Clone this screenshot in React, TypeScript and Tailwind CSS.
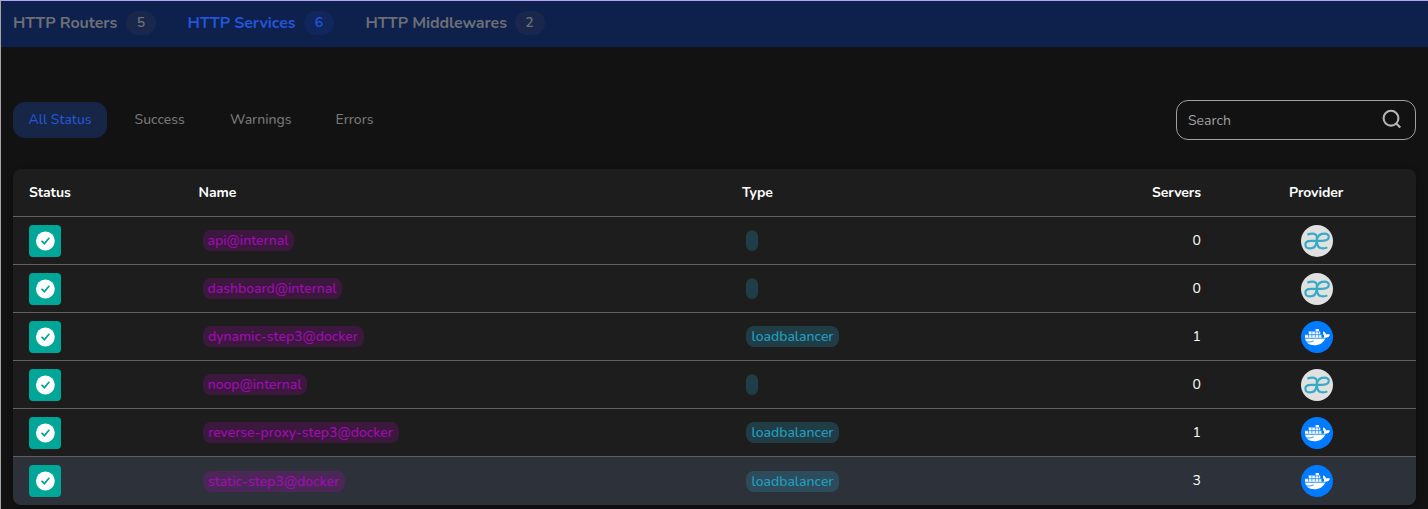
const tabs = [
  { label: 'HTTP Routers', count: 5, width: 'w-[105px]', active: false },
  { label: 'HTTP Services', count: 6, width: 'w-[108.5px]', active: true },
  { label: 'HTTP Middlewares', count: 2, width: 'w-[141px]', active: false },
];

const services = [
  { name: 'api@internal', type: '', servers: 0, provider: 'internal', chip: 'w-[91px]' },
  { name: 'dashboard@internal', type: '', servers: 0, provider: 'internal', chip: 'w-[139px]' },
  { name: 'dynamic-step3@docker', type: 'loadbalancer', servers: 1, provider: 'docker', chip: 'w-[161px]' },
  { name: 'noop@internal', type: '', servers: 0, provider: 'internal', chip: 'w-[104px]' },
  { name: 'reverse-proxy-step3@docker', type: 'loadbalancer', servers: 1, provider: 'docker', chip: 'w-[196px]' },
  { name: 'static-step3@docker', type: 'loadbalancer', servers: 3, provider: 'docker', chip: 'w-[142px]' },
];

function StatusIcon() {
  return (
    <span className="flex size-8 items-center justify-center rounded-[4px] bg-[#00a697]">
      <svg viewBox="0 0 20 20" className="size-5">
        <circle cx="10.4" cy="10" r="9.4" fill="#fff" />
        <path d="m6.5 9.8 2.9 2.9 4.9-6" fill="none" stroke="#00a697" strokeWidth="1.7" />
      </svg>
    </span>
  );
}

function ProviderIcon({ provider }: { provider: string }) {
  if (provider === 'docker') {
    return (
      <svg viewBox="0 0 32 32" className="size-8">
        <circle cx="16" cy="16" r="16" fill="#007bff" />
        <g fill="#fff">
          <path d="M14 8h4v2.9h-4zM7.2 10.6h12v3.2h-12zM4 13.6h16.4v3.4H4z" />
          <path d="M4 16.8h18.2c1-.6 1.3-1.4.6-2.5-.9-1.3-1-2.7-.5-4 1.6.8 2.5 1.9 2.9 3.2 1.3-.4 2.6-.4 3.8.2-.7 1.9-2.1 2.8-4.2 3-2.3 5-6.2 7.5-11.4 7.5C7.6 24.2 4.4 21.4 4 16.8z" />
        </g>
        <path d="M4 13.7h16.4M14 10.8h4M7.5 10.6v6M10.9 10.6v6M14.3 8v8.6M17.7 10.6v6" fill="none" stroke="#007bff" strokeWidth=".7" />
        <path d="M3.6 17.3h23M5.1 20.8c2.4.5 5.2.2 7.6-1" fill="none" stroke="#007bff" strokeWidth=".8" />
      </svg>
    );
  }
  return (
    <svg viewBox="0 0 32 32" className="size-8">
      <circle cx="16" cy="16" r="16" fill="#e1e1e1" />
      <g fill="none" stroke="#38abc9">
        <path strokeWidth="2.2" d="M6.4 9.8c1.4-.8 2.9-1.2 4.6-1.2 3.6 0 5 1.6 4.9 4.6l-.3 3.5c-.3 4.2-2.8 6.7-6.4 6.7-3 0-4.8-1.4-4.8-3.7 0-2.7 2-3.9 5.4-3.9H21" />
        <path strokeWidth="2.2" d="M21 15.8c4.4 0 6.8-1 6.8-3.7 0-2.3-1.8-3.5-4.6-3.5-4.7 0-7.3 3.1-7.3 7.8 0 4.6 2.3 7 6.2 7 1.6 0 3-.3 4.3-1" />
      </g>
    </svg>
  );
}

const columns = 'grid grid-cols-[169.5px_543.5px_220px_239px_1fr] pl-4';

export default function App() {
  return (
    <div className="h-[509px] overflow-hidden border-t border-l border-t-[#b3a2f5] border-l-[#a5a5a5] bg-[#121212] font-['Nunito','Lato',sans-serif] text-[14px] leading-5">
      <nav className="-ml-px flex h-[46px] items-center border-l border-[#9f90ee] bg-[#0e204c] pb-[2px] pl-3">
        {tabs.map((tab) => (
          <div key={tab.label} className={`mr-[31.5px] flex items-center gap-2 text-[16px] font-bold ${tab.active ? 'text-[#2256d8]' : 'text-[#6c6f76]'}`}>
            <span className={`whitespace-nowrap tracking-[-0.09px] ${tab.width}`}>{tab.label}</span>
            <span className={`flex h-6 w-[30px] items-center justify-center rounded-xl text-[14px] font-semibold ${tab.active ? 'bg-[#10265c]' : 'bg-[#1a274c]'}`}>{tab.count}</span>
          </div>
        ))}
      </nav>

      <main className="px-3 pt-[53px]">
        <div className="flex h-10 items-center justify-between">
          <div className="flex h-9 items-center font-medium text-[#777]">
            <span className="mr-[27.5px] flex h-9 w-[94px] items-center justify-center rounded-xl bg-[#172546] text-[#2256d8]">All Status</span>
            <span className="w-[95.5px]">Success</span>
            <span className="w-[105.5px]">Warnings</span>
            <span>Errors</span>
          </div>
          <div className="flex h-10 w-60 items-center justify-between rounded-xl border border-[#a0a0a0] pr-3 pl-[11px] text-[#a0a0a0]">
            <span className="pt-0.5">Search</span>
            <svg viewBox="0 0 22 22" className="size-[22px]" fill="none" stroke="#b5b5b5" strokeWidth="2.1">
              <circle cx="10" cy="9.2" r="7.4" />
              <path d="m15.2 14.4 4.1 4.1" />
            </svg>
          </div>
        </div>

        <section className="mt-[29px] overflow-hidden rounded-lg bg-[#1d1d1d] text-white shadow-[0_1px_5px_rgba(0,0,0,0.4)]">
          <div className={`${columns} h-12 items-center border-b border-[#606060] font-bold tracking-[-0.06px]`}>
            <span>Status</span>
            <span>Name</span>
            <span>Type</span>
            <span className="text-right">Servers</span>
            <span className="pl-[88px]">Provider</span>
          </div>
          {services.map((service, i) => {
            const last = i === services.length - 1;
            return (
              <div key={service.name} className={`${columns} h-12 items-center ${last ? 'bg-[#2d3139]' : 'border-b border-[#606060]'}`}>
                <StatusIcon />
                <span className={`ml-[4.5px] flex h-[21px] items-center justify-center rounded-lg pr-px font-medium text-[#a20bb4] ${service.chip} ${last ? 'mt-px bg-[#4a2757]' : 'bg-[#3c183f]'}`}>{service.name}</span>
                <span className={`ml-1 flex h-[21px] items-center justify-center rounded-lg font-medium text-[#249ec0] ${service.type ? 'w-[93px]' : 'w-3'} ${last ? 'mt-px bg-[#2c4c5b]' : 'bg-[#203c45]'}`}>{service.type}</span>
                <span className="text-right">{service.servers}</span>
                <span className="pl-[100px]"><ProviderIcon provider={service.provider} /></span>
              </div>
            );
          })}
        </section>
      </main>
    </div>
  );
}
